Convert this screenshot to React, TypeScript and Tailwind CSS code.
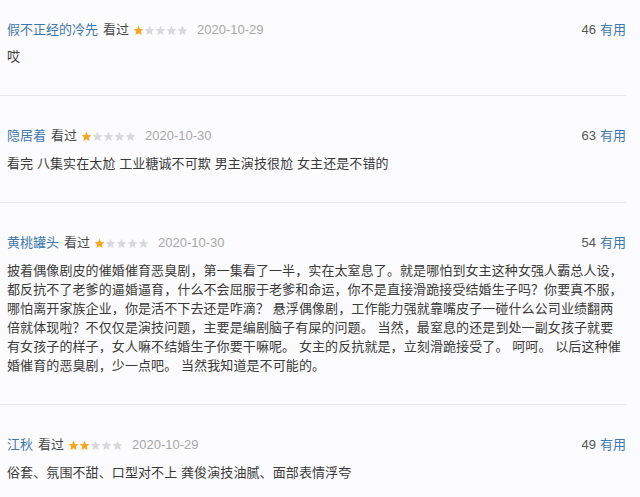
const font = { fontFamily: '"Liberation Sans", "Noto Sans CJK SC", sans-serif' };

type Review = {
  name: string;
  stars: number;
  date: string;
  votes: number;
  lines: string[];
};

const reviews: Review[] = [
  { name: "假不正经的冷先", stars: 1, date: "2020-10-29", votes: 46, lines: ["哎"] },
  {
    name: "隐居着",
    stars: 1,
    date: "2020-10-30",
    votes: 63,
    lines: ["看完 八集实在太尬 工业糖诚不可欺 男主演技很尬 女主还是不错的"],
  },
  {
    name: "黄桃罐头",
    stars: 1,
    date: "2020-10-30",
    votes: 54,
    lines: [
      "披着偶像剧皮的催婚催育恶臭剧，第一集看了一半，实在太窒息了。就是哪怕到女主这种女强人霸总人设，",
      "都反抗不了老爹的逼婚逼育，什么不会屈服于老爹和命运，你不是直接滑跪接受结婚生子吗？你要真不服，",
      "哪怕离开家族企业，你是活不下去还是咋滴？ 悬浮偶像剧，工作能力强就靠嘴皮子一碰什么公司业绩翻两",
      "倍就体现啦？不仅仅是演技问题，主要是编剧脑子有屎的问题。 当然，最窒息的还是到处一副女孩子就要",
      "有女孩子的样子，女人嘛不结婚生子你要干嘛呢。 女主的反抗就是，立刻滑跪接受了。 呵呵。 以后这种催",
      "婚催育的恶臭剧，少一点吧。 当然我知道是不可能的。",
    ],
  },
  {
    name: "江秋",
    stars: 2,
    date: "2020-10-29",
    votes: 49,
    lines: ["俗套、氛围不甜、口型对不上 龚俊演技油腻、面部表情浮夸"],
  },
];

function Star({ on }: { on: boolean }) {
  return (
    <svg width="11" height="11" viewBox="0 0 24 24" className="shrink-0">
      <path
        d="M12 1.5l3.1 7.1 7.7.7-5.8 5.1 1.7 7.6L12 18l-6.7 4 1.7-7.6-5.8-5.1 7.7-.7z"
        fill={on ? "#f6a623" : "#d9d9dc"}
      />
    </svg>
  );
}

function Item({ r, first }: { r: Review; first: boolean }) {
  return (
    <div className={`border-b border-[#e9e8ed] pl-[7px] pb-[29px] ${first ? "pt-[20px]" : "pt-[30px]"}`}>
      <div className="flex h-5 items-center text-[13px] leading-5">
        <span className="text-[#3f78ad]">{r.name}</span>
        <span className="ml-[5px] text-[#4a4a4a]">看过</span>
        <span className="ml-[4px] flex">
          {[0, 1, 2, 3, 4].map((i) => (
            <Star key={i} on={i < r.stars} />
          ))}
        </span>
        <span className="ml-[9px] text-[#a8a8a8]">{r.date}</span>
        <span className="ml-auto text-[#555]">{r.votes}</span>
        <span className="ml-[4px] text-[#3f78ad]">有用</span>
      </div>
      <div
        className={`text-[13px] leading-[19px] tracking-[0.1px] text-[#3a3a3a] ${first ? "mt-[7px]" : "mt-[8px]"}`}
      >
        {r.lines.map((l, i) => (
          <div key={i} className="whitespace-pre">
            {l}
          </div>
        ))}
      </div>
    </div>
  );
}

export default function App() {
  return (
    <div className="h-[497px] w-[640px] overflow-hidden bg-[#fcfbfd]" style={font}>
      <div className="w-[626px]">
        {reviews.map((r, i) => (
          <Item key={r.name} r={r} first={i === 0} />
        ))}
      </div>
    </div>
  );
}
